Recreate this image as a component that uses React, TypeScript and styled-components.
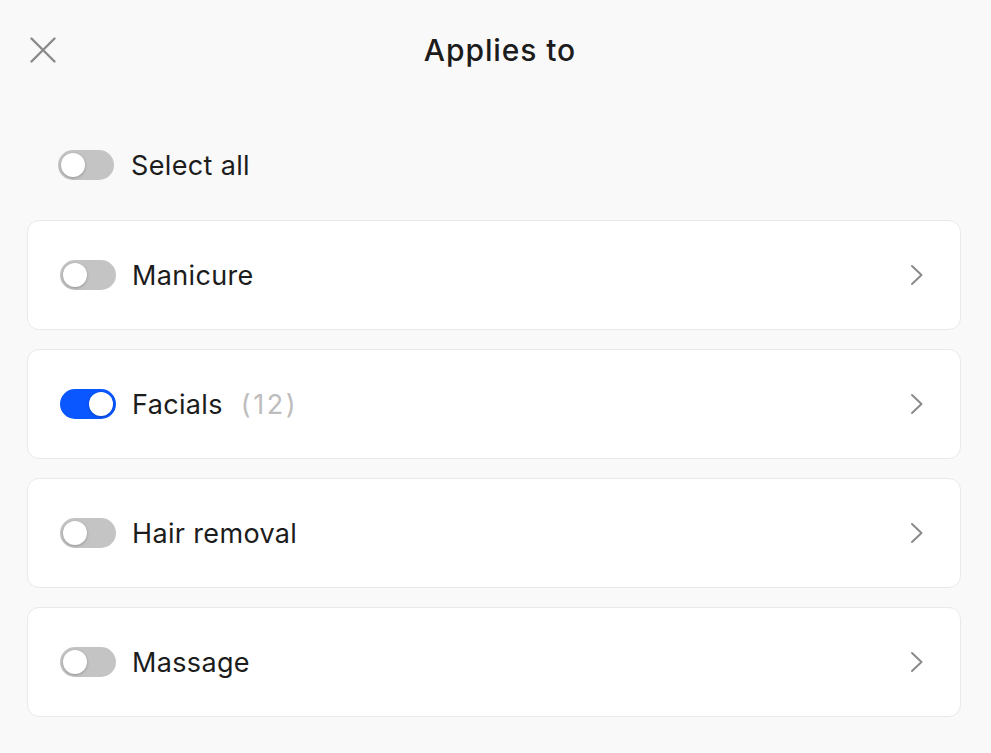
import React, { useState } from "react"
import styled, { createGlobalStyle } from "styled-components"

const Global = createGlobalStyle`
  html, body {
    margin: 0;
    padding: 0;
    background: #f9f9f9;
    font-family: Inter, "Noto Sans", sans-serif;
    color: #1c1c1c;
  }
  * { box-sizing: border-box; }
`

const Page = styled.div`
  width: 991px;
  height: 753px;
  padding: 0 30px 0 27px;
  background: #f9f9f9;
  display: flex;
  flex-direction: column;
`
const Header = styled.header`
  position: relative;
  height: 100px;
  display: flex;
  align-items: center;
  justify-content: center;
`
const CloseButton = styled.button`
  position: absolute;
  left: 1px;
  top: 35px;
  width: 30px;
  height: 30px;
  padding: 0;
  border: none;
  background: none;
  display: flex;
  align-items: center;
  justify-content: center;
  cursor: pointer;
`
const Title = styled.h1`
  margin: 0 0 0 12px;
  font-size: 30px;
  font-weight: 500;
  letter-spacing: 0.9px;
  color: #1c1c1c;
`
const SelectRow = styled.div`
  display: flex;
  align-items: center;
  gap: 17px;
  height: 30px;
  margin: 50px 0 40px 31px;
`
const List = styled.div`
  display: flex;
  flex-direction: column;
  gap: 19px;
`
const Card = styled.div`
  height: 110px;
  background: #fff;
  border: 1px solid #e9e9e9;
  border-radius: 12px;
  display: flex;
  align-items: center;
  padding: 0 36px 0 32px;
  gap: 16px;
`
const Label = styled.span`
  font-size: 27px;
  font-weight: 400;
  letter-spacing: 0.35px;
  color: #1c1c1c;
`
const Count = styled.span`
  margin-left: 18px;
  letter-spacing: 2.5px;
  color: #bdbdbd;
`
const Chevron = styled.div`
  margin-left: auto;
  display: flex;
`
const Track = styled.button<{ $on: boolean }>`
  position: relative;
  flex: none;
  width: 56px;
  height: 30px;
  padding: 0;
  border: none;
  border-radius: 15px;
  background: ${p => (p.$on ? "#0a57ff" : "#c4c4c4")};
  cursor: pointer;
`
const Knob = styled.span<{ $on: boolean }>`
  position: absolute;
  top: 3px;
  left: ${p => (p.$on ? "29px" : "3px")};
  width: 24px;
  height: 24px;
  border-radius: 50%;
  background: #fff;
  box-shadow: 0 1px 3px rgba(0, 0, 0, 0.25);
`

function Toggle({ on, onClick }: { on: boolean; onClick: () => void }) {
  return (
    <Track $on={on} onClick={onClick}>
      <Knob $on={on} />
    </Track>
  )
}

const items = [
  { name: "Manicure" },
  { name: "Facials", count: 12 },
  { name: "Hair removal" },
  { name: "Massage" },
]

export default function App() {
  const [on, setOn] = useState<Record<string, boolean>>({ Facials: true })
  const allOn = items.every(i => on[i.name])
  const toggle = (name: string) => setOn(s => ({ ...s, [name]: !s[name] }))
  const toggleAll = () => {
    const next: Record<string, boolean> = {}
    items.forEach(i => (next[i.name] = !allOn))
    setOn(next)
  }
  return (
    <Page>
      <Global />
      <Header>
        <CloseButton aria-label="Close">
          <svg width="26" height="26" viewBox="0 0 26 26" fill="none" stroke="#8a8a8a" strokeWidth="2.4" strokeLinecap="round">
            <path d="M1.5 1.5l23 23M24.5 1.5l-23 23" />
          </svg>
        </CloseButton>
        <Title>Applies to</Title>
      </Header>
      <SelectRow>
        <Toggle on={allOn} onClick={toggleAll} />
        <Label>Select all</Label>
      </SelectRow>
      <List>
        {items.map(item => (
          <Card key={item.name}>
            <Toggle on={!!on[item.name]} onClick={() => toggle(item.name)} />
            <Label>
              {item.name}
              {item.count !== undefined && <Count>({item.count})</Count>}
            </Label>
            <Chevron>
              <svg width="14" height="22" viewBox="0 0 14 22" fill="none" stroke="#8a8a8a" strokeWidth="2" strokeLinecap="round" strokeLinejoin="round">
                <path d="M2 2l9.5 9-9.5 9" />
              </svg>
            </Chevron>
          </Card>
        ))}
      </List>
    </Page>
  )
}
